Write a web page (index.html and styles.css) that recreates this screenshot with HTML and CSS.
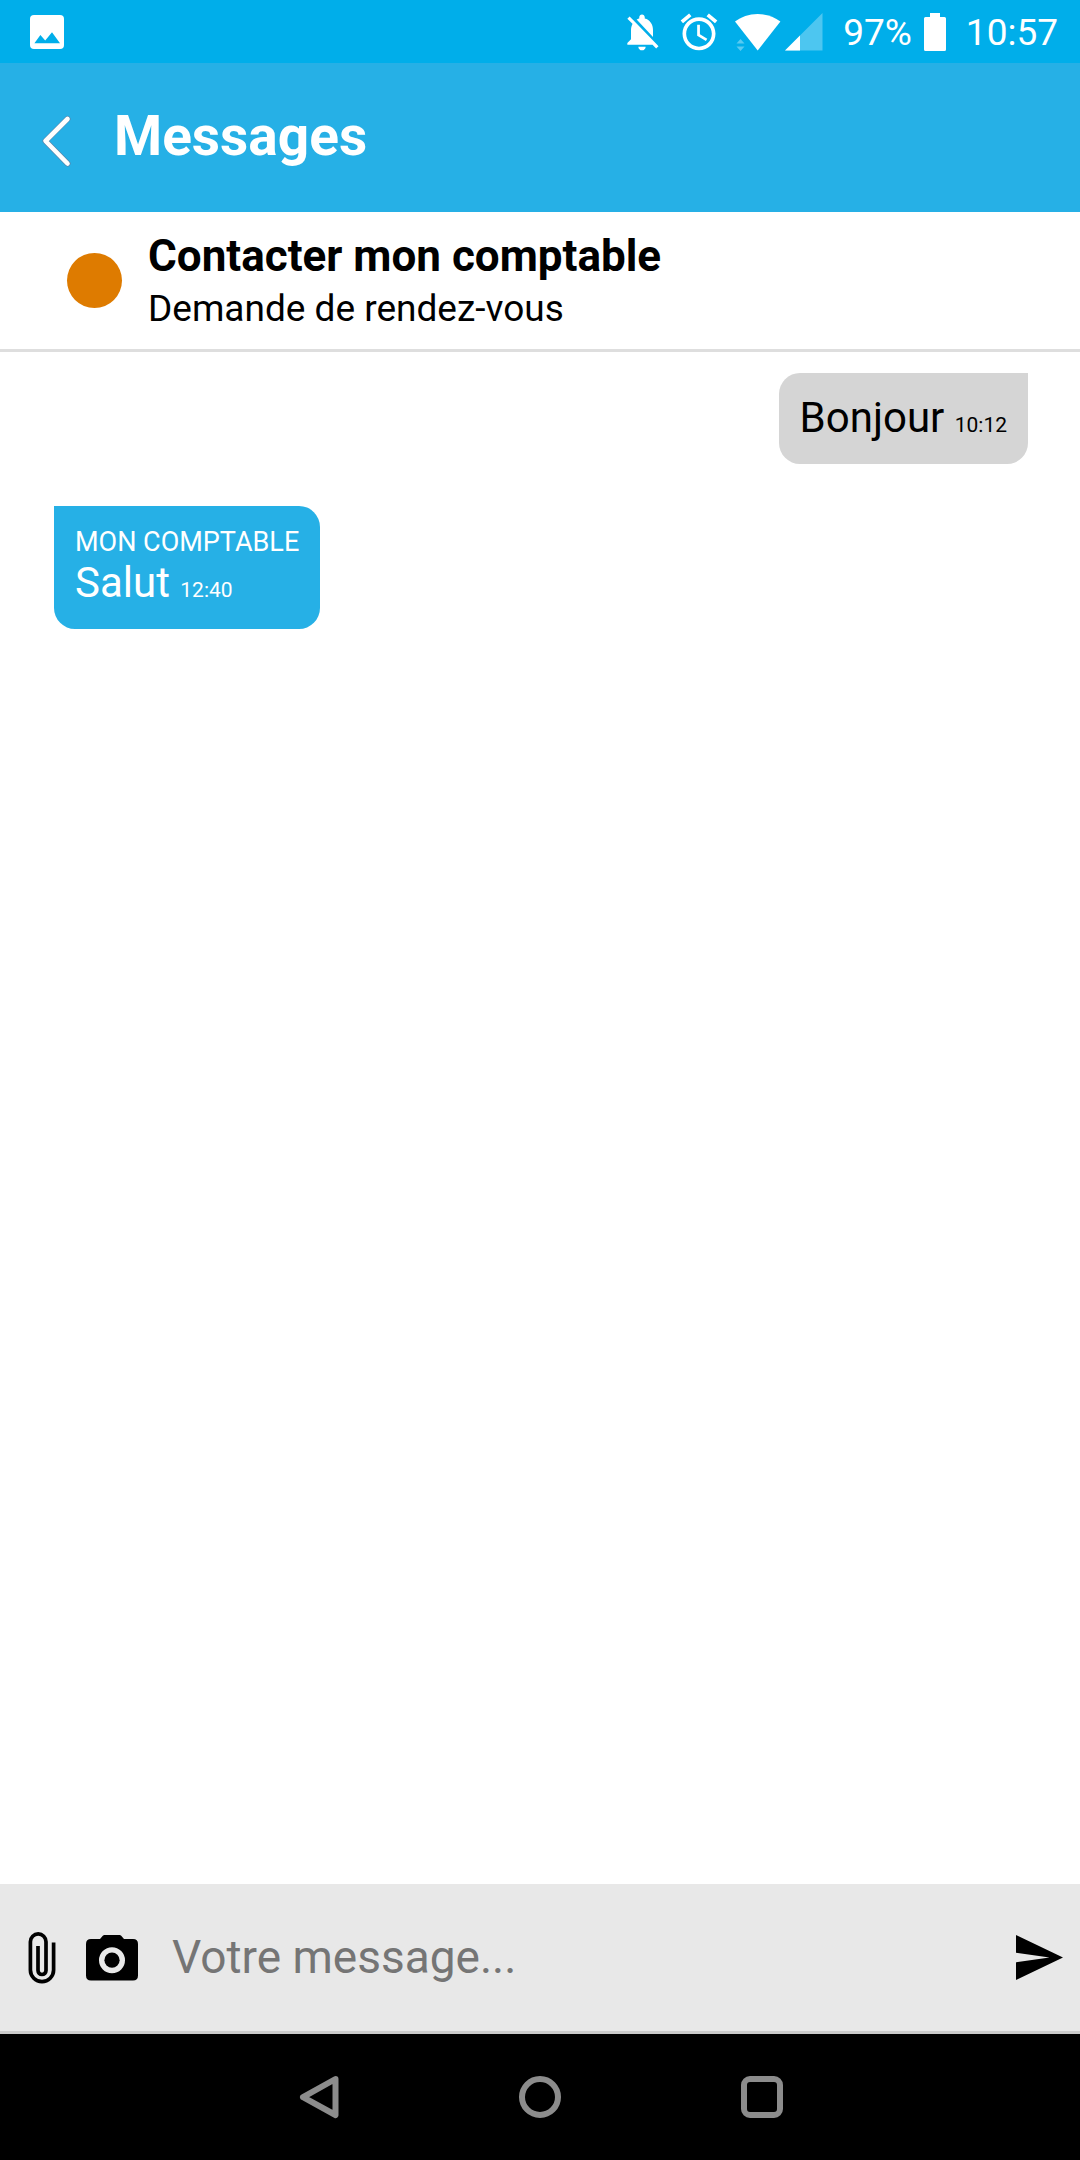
FILE: index.html
```html
<!DOCTYPE html>
<html lang="fr">
<head>
<meta charset="utf-8">
<meta name="viewport" content="width=device-width, initial-scale=1">
<title>Messages</title>
<link rel="stylesheet" href="styles.css">
</head>
<body>
<div class="status-bar">
  <svg class="status-photo" width="34" height="34" viewBox="0 0 34 34" aria-hidden="true"><rect width="34" height="34" rx="4" fill="#fff"/><path d="M4.4 28.3L10.4 20l4.8 5.6L22 17.2l8 11.1z" fill="#00aeea"/></svg>
  <svg class="status-bell" width="44" height="44" viewBox="0 0 24 24" aria-hidden="true"><path fill="#fff" d="M20 18.69L7.84 6.14 5.27 3.49 4 4.76l2.8 2.8v.01c-.52.99-.8 2.16-.8 3.42v5l-2 2v1h13.73l2 2L21 19.72l-1-1.03zM12 22c1.11 0 2-.89 2-2h-4c0 1.11.89 2 2 2zm6-7.32V11c0-3.08-1.64-5.64-4.5-6.32V4c0-.83-.67-1.5-1.5-1.5s-1.5.67-1.5 1.5v.68c-.15.03-.29.08-.42.12-.1.03-.2.07-.3.11h-.01c-.01 0-.01 0-.02.01-.23.09-.46.2-.68.31 0 0-.01 0-.01.01L18 14.68z"/></svg>
  <svg class="status-alarm" width="44" height="44" viewBox="0 0 24 24" aria-hidden="true"><path fill="#fff" d="M22 5.72l-4.6-3.86-1.29 1.53 4.6 3.86L22 5.72zM7.88 3.39L6.6 1.86 2 5.71l1.29 1.53 4.59-3.85zM12.5 8H11v6l4.75 2.85.75-1.23-4-2.37V8zM12 4c-4.97 0-9 4.03-9 9s4.02 9 9 9c4.97 0 9-4.03 9-9s-4.03-9-9-9zm0 16c-3.87 0-7-3.13-7-7s3.13-7 7-7 7 3.13 7 7-3.13 7-7 7z"/></svg>
  <svg class="status-wifi" width="46" height="38" viewBox="0 0 46 38" aria-hidden="true"><path fill="#fff" d="M0 8.5C6 4 14 1 22.700 1S39.500 4 45.400 8.500L22.700 37.500z"/><path fill="#fff" opacity=".35" d="M1.500 30.500L5.500 26l4 4.500zM1.500 33.500h8L5.500 38z"/></svg>
  <svg class="status-signal" width="38" height="38" viewBox="0 0 38 38" aria-hidden="true"><path fill="#fff" opacity=".3" d="M37.500 0v37.500H0z"/><path fill="#fff" d="M15 22.500v15H0z"/></svg>
  <span class="status-text battery-level">97%</span>
  <svg class="status-battery" width="22" height="38" viewBox="0 0 22 38" aria-hidden="true"><path fill="#fff" d="M6 0h10v4h4.500q1.500 0 1.500 1.500v31q0 1.500-1.500 1.500h-19Q0 38 0 36.500v-31Q0 4 1.500 4H6z"/></svg>
  <time class="status-text clock">10:57</time>
</div>

<header class="app-bar">
  <button class="icon-button back" type="button" aria-label="Retour">
    <svg width="30" height="52" viewBox="0 0 30 52" fill="none" stroke-linecap="round" stroke-linejoin="round"><path d="M25.500 4L3.500 26l22 22.500" stroke="#5787ad" stroke-width="6"/><path d="M25.500 4L3.500 26l22 22.500" stroke="#fff" stroke-width="4.600"/></svg>
  </button>
  <h1 class="title">Messages</h1>
</header>

<section class="contact">
  <span class="contact-dot"></span>
  <div>
    <h2 class="contact-name">Contacter mon comptable</h2>
    <p class="contact-subject">Demande de rendez-vous</p>
  </div>
</section>

<main class="chat">
  <article class="bubble sent">
    <p class="message">Bonjour <time class="time">10:12</time></p>
  </article>
  <article class="bubble received">
    <p class="author">MON COMPTABLE</p>
    <p class="message">Salut <time class="time">12:40</time></p>
  </article>
</main>

<form class="composer">
  <button class="icon-button attach" type="button" aria-label="Joindre un fichier">
    <svg width="28" height="52" viewBox="0 0 28 52" fill="none" stroke="#000" stroke-width="3.700"><path d="M25.600 10.500V38a11.600 11.600 0 0 1-23.200 0V9.700a7.800 7.800 0 0 1 15.600 0v28.800a4 4 0 0 1-8 0V14"/></svg>
  </button>
  <button class="icon-button camera" type="button" aria-label="Prendre une photo">
    <svg width="52" height="46" viewBox="0 0 52 46"><path fill-rule="evenodd" d="M18.500 0h15q1 0 1.700.8L38 4h9q5 0 5 5v31.500q0 5-5 5H5q-5 0-5-5V9q0-5 5-5h9l2.800-3.200Q17.500 0 18.500 0zM26 12.200a13 13 0 1 0 0 26 13 13 0 0 0 0-26z"/><circle cx="26" cy="25.200" r="7.600"/></svg>
  </button>
  <input class="field" type="text" placeholder="Votre message..." aria-label="Votre message">
  <button class="icon-button send" type="submit" aria-label="Envoyer">
    <svg width="47" height="45" viewBox="0 0 47 45"><path d="M0 0l47 22.500L0 45V27.200l33.500-4.700L0 17.800z"/></svg>
  </button>
</form>

<nav class="system-nav" aria-label="Navigation système">
  <button class="icon-button nav-key" type="button" aria-label="Précédent">
    <svg width="44" height="44" viewBox="0 0 44 44" fill="none" stroke="#8c8c8c" stroke-width="6" stroke-linejoin="round"><path d="M39.500 4L7 22.200 39.500 40z"/></svg>
  </button>
  <button class="icon-button nav-key" type="button" aria-label="Accueil">
    <svg width="44" height="44" viewBox="0 0 44 44" fill="none" stroke="#8c8c8c" stroke-width="6"><circle cx="22" cy="22" r="18"/></svg>
  </button>
  <button class="icon-button nav-key" type="button" aria-label="Applications récentes">
    <svg width="44" height="44" viewBox="0 0 44 44" fill="none" stroke="#8c8c8c" stroke-width="6"><rect x="4" y="4" width="36" height="36" rx="6"/></svg>
  </button>
</nav>
</body>
</html>
```
FILE: styles.css
```css
* {
  box-sizing: border-box;
}

body {
  margin: 0;
  min-height: 100vh;
  display: flex;
  flex-direction: column;
  background: #fff;
  color: #000;
  font-family: Roboto, "Liberation Sans", sans-serif;
}

h1, h2, p {
  margin: 0;
}

svg {
  display: block;
  flex: none;
}

.icon-button {
  display: flex;
  align-items: center;
  justify-content: center;
  flex: none;
  padding: 0;
  border: 0;
  background: none;
}

/* Status bar */
.status-bar {
  display: flex;
  align-items: center;
  height: 63px;
  padding: 0 22px 0 30px;
  background: #00aeea;
  color: #fff;
}

.status-text {
  padding-top: 2px;
  font-size: 37px;
  line-height: 44px;
}

.status-bell {
  margin-left: auto;
}

.status-alarm {
  margin-left: 13px;
}

.status-wifi {
  margin-left: 14px;
}

.status-signal {
  margin-left: 4px;
}

.battery-level {
  margin-left: 20px;
}

.status-battery {
  margin-left: 12px;
}

.clock {
  margin-left: 20px;
}

/* App bar */
.app-bar {
  display: flex;
  align-items: center;
  gap: 42px;
  height: 149px;
  padding: 0 42px;
  background: #26b0e6;
  color: #fff;
}

.back {
  padding-top: 6px;
}

.title {
  padding-bottom: 4px;
  font-size: 55px;
  line-height: 64px;
  font-weight: 700;
}

/* Conversation heading */
.contact {
  display: flex;
  align-items: center;
  gap: 26px;
  height: 140px;
  padding: 0 67px;
  border-bottom: 3px solid #dedede;
}

.contact-dot {
  flex: none;
  width: 55px;
  height: 55px;
  border-radius: 50%;
  background: #de7b00;
}

.contact-name {
  font-size: 44px;
  line-height: 56px;
  font-weight: 700;
}

.contact-subject {
  font-size: 37px;
  line-height: 50px;
}

/* Messages */
.chat {
  flex: 1;
  display: flex;
  flex-direction: column;
  gap: 42px;
  padding: 21px 52px 21px 54px;
}

.bubble {
  padding: 20px 21px 22px;
  border-radius: 21px;
}

.sent {
  align-self: flex-end;
  border-top-right-radius: 0;
  background: #d5d5d5;
}

.received {
  align-self: flex-start;
  border-top-left-radius: 0;
  background: #26b0e6;
  color: #fff;
}

.author {
  font-size: 27px;
  line-height: 32px;
}

.message {
  font-size: 42px;
  line-height: 49px;
}

.time {
  font-size: 21px;
  line-height: 21px;
}

/* Composer */
.composer {
  display: flex;
  align-items: center;
  height: 150px;
  padding: 0 17px 0 28px;
  border-bottom: 3px solid #cbcbcb;
  background: #e8e8e8;
}

.camera {
  margin-left: 30px;
}

.field {
  flex: 1;
  min-width: 0;
  height: 84px;
  margin-left: 34px;
  padding: 0 0 2px;
  border: 0;
  outline: 0;
  background: none;
  color: #000;
  font-family: inherit;
  font-size: 46px;
}

.field::placeholder {
  color: #757575;
  opacity: 1;
}

/* System navigation */
.system-nav {
  display: flex;
  justify-content: center;
  height: 126px;
  background: #000;
}

.nav-key {
  width: 222px;
}
```
